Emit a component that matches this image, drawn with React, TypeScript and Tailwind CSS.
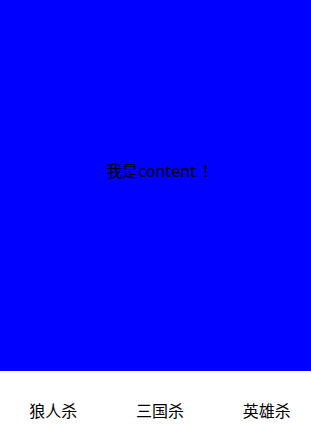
import React from "react";

const tabs = ["狼人杀", "三国杀", "英雄杀"];

export default function App() {
  return (
    <div
      className="w-[320px] h-[445px] flex flex-col bg-white text-black"
      style={{ fontFamily: '"Noto Sans", "Noto Sans CJK SC", sans-serif' }}
    >
      <main className="h-[371px] shrink-0 bg-[#0000ff] flex items-center justify-center pb-[29px] pl-[4px]">
        <span className="text-[16px] leading-none">
          我是content<span className="ml-[6px]">！</span>
        </span>
      </main>
      <nav className="flex-1 flex items-center pt-[5px]">
        {tabs.map((t) => (
          <div key={t} className="flex-1 text-center text-[16px] leading-none">
            {t}
          </div>
        ))}
      </nav>
    </div>
  );
}
